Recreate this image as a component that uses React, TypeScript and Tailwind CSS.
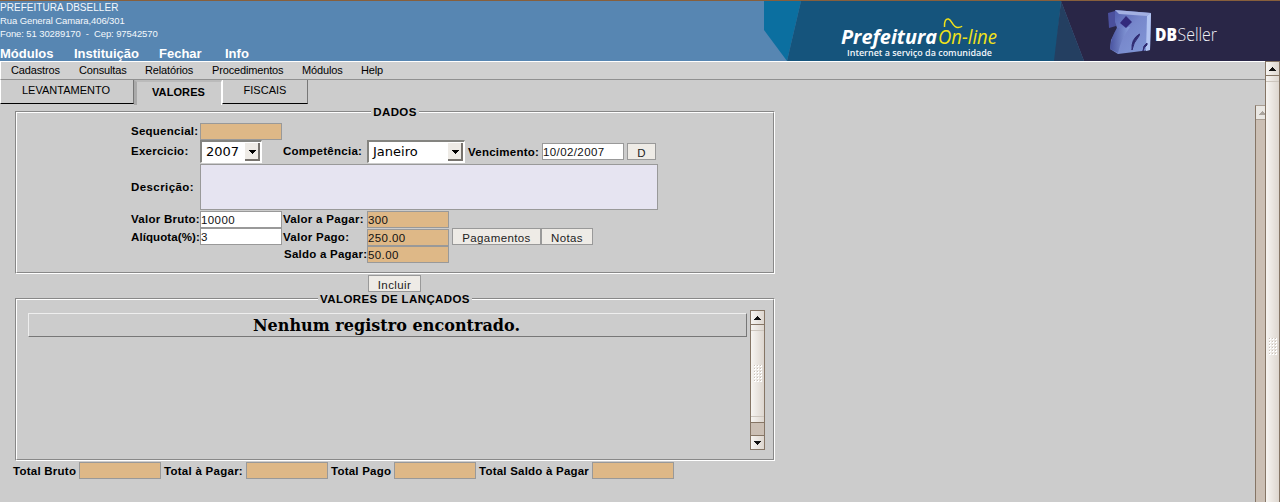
import type { ReactNode } from "react";

const label = "shrink-0 whitespace-nowrap text-[11.5px] leading-[15px] h-[14px] font-bold text-black";

function Field({ value = "", className = "bg-[#deb887]" }: { value?: string; className?: string }) {
  return (
    <input
      readOnly
      value={value}
      className={`block h-[17px] w-[82px] shrink-0 border border-[#999999] pt-px text-[11.5px] leading-[14px] tracking-[0.4px] text-[#111] outline-none ${className}`}
    />
  );
}

function Button({ children, className }: { children: ReactNode; className: string }) {
  return (
    <button className={`flex h-[17px] shrink-0 items-center justify-center border border-[#999999] bg-[#eeebe6] pt-[2px] text-[11.5px] leading-[14px] tracking-[0.4px] text-[#222] ${className}`}>
      {children}
    </button>
  );
}

function Select({ value, className }: { value: string; className: string }) {
  return (
    <div className={`flex h-[23px] shrink-0 border-t-2 border-r border-b border-l-2 border-t-[#848480] border-r-white border-b-white border-l-[#848480] bg-white ${className}`}>
      <span className="flex-1 pl-[4px] font-['DejaVu_Sans'] text-[13px] leading-[20px] text-black">{value}</span>
      <span className="mr-px flex h-[18px] w-[15px] items-center justify-center self-center border-r-2 border-b-2 border-[#77736e] bg-[#eeebe6] pt-px pl-[2px]">
        <svg width="7" height="4" viewBox="0 0 7 4" shapeRendering="crispEdges" className="shrink-0"><path d="M0 0h7v1H6v1H5v1H4v1H3V3H2V2H1V1H0z" /></svg>
      </span>
    </div>
  );
}

function Arrow({ down = false, fill = "#111" }: { down?: boolean; fill?: string }) {
  return (
    <svg width="7" height="4" viewBox="0 0 7 4" shapeRendering="crispEdges" className={`shrink-0 ${down ? "rotate-180" : ""}`}>
      <path d="M3 0h1v1h1v1h1v1h1v1H0V3h1V2h1V1h1z" fill={fill} />
    </svg>
  );
}

function Grip() {
  return (
    <svg width="9" height="18" viewBox="0 0 9 18" shapeRendering="crispEdges" className="shrink-0">
      {[0, 3, 6, 9, 12, 15].map((y) =>
        [0, 3, 6].map((x) => (
          <g key={`${x}-${y}`}>
            <rect x={x} y={y} width="2" height="2" fill="#fff" />
            <rect x={x} y={y} width="1" height="1" fill="#c9c1b9" />
          </g>
        ))
      )}
    </svg>
  );
}

const face = "bg-linear-to-r from-[#f7f5f2] to-[#ddd6cf]";

function Fieldset({ title, className, children }: { title: string; className: string; children: ReactNode }) {
  return (
    <section className={`ml-[15px] w-[760px] border border-t-[#888] border-r-white border-b-white border-l-[#888] ${className}`}>
      <div className="flex h-full flex-col border border-t-white border-r-[#888] border-b-[#888] border-l-white">
        <h2 className="-mt-[8px] h-[14px] self-center bg-[#ccc] px-[2px] text-[11.5px] leading-[15px] font-bold tracking-[0.4px]">{title}</h2>
        {children}
      </div>
    </section>
  );
}

function Banner() {
  return (
    <svg width="516" height="60" viewBox="764 1 516 60" className="block shrink-0">
      <defs>
        <linearGradient id="front" x1="0" y1="0" x2="1" y2="1">
          <stop offset="0" stopColor="#4d58ab" />
          <stop offset=".45" stopColor="#7787cb" />
          <stop offset="1" stopColor="#8299d8" />
        </linearGradient>
        <linearGradient id="side" x1="0" y1="0" x2="1" y2="0">
          <stop offset="0" stopColor="#3f4896" />
          <stop offset="1" stopColor="#8fa6e2" />
        </linearGradient>
      </defs>
      <path d="M764 1H801L787 61L764 30z" fill="#0b6fa0" />
      <path d="M801 1H1061L1055 61H787z" fill="#15547c" />
      <path d="M1061 1L1084 61H1054z" fill="#243f61" />
      <path d="M1061 1H1280V61H1084z" fill="#292647" />
      <text x="841" y="44" fontFamily="Open Sans" fontStyle="italic" fontWeight="700" fontSize="20" fill="#fff" textLength="96" lengthAdjust="spacingAndGlyphs">Prefeitura</text>
      <text x="938" y="44" fontFamily="Open Sans" fontStyle="italic" fontSize="20" fill="#f2e219" textLength="59" lengthAdjust="spacingAndGlyphs">On-line</text>
      <path d="M944.5 27C944 21 946 18.5 948.5 19C952 20 953 28 958 27.500C960 27.300 961.500 27 962 26" fill="none" stroke="#f2e219" strokeWidth="1.5" />
      <text x="847" y="55.500" fontFamily="Open Sans" fontSize="9.500" fontWeight="600" fill="#f2f6fa" textLength="145" lengthAdjust="spacingAndGlyphs">Internet a serviço da comunidade</text>
      <path d="M1108 13L1115 11L1116 26L1109 28z" fill="#4b509d" />
      <path d="M1115 10L1151 13L1150 50L1118 54L1110 49L1111 40L1117 28L1115 22z" fill="url(#front)" />
      <path d="M1115 10L1151 13L1147 16L1119 14z" fill="#a3b0e2" />
      <path d="M1147 16L1151 13L1150 50L1146 51z" fill="#b3c5f2" />
      <path d="M1117 28L1130 27Q1121 39 1118 53L1110 49Q1111 37 1117 28z" fill="url(#side)" opacity=".8" />
      <path d="M1126 16L1132 22L1126 28L1120 23z" fill="#322a7c" />
      <path d="M1139.500 34Q1131 39 1132 50Q1133 43 1139 36zM1147 43Q1143 45 1143 51Q1144 47 1147 45z" fill="#302b72" stroke="#302b72" />
      <text x="1155" y="40.500" fontFamily="Open Sans" fontWeight="800" fontSize="18" fill="#fff" textLength="22" lengthAdjust="spacingAndGlyphs">DB</text>
      <text x="1177.500" y="40.500" fontFamily="Open Sans" fontWeight="300" fontSize="18" fill="#f0f0f6" textLength="39.500" lengthAdjust="spacingAndGlyphs">Seller</text>
    </svg>
  );
}

export default function App() {
  return (
    <div className="flex h-[502px] w-[1280px] flex-col overflow-hidden bg-[#ccc] font-['Liberation_Sans',sans-serif] text-black">
      <header className="flex h-[61px] shrink-0 justify-between border-t border-[#875f3c] bg-[#5786b2] text-white">
        <div className="flex flex-col text-[9.5px] leading-[13px] tracking-[-0.1px] whitespace-pre text-[#f4f8fc]">
          <span className="text-[10px] tracking-[0.03px]">PREFEITURA DBSELLER</span>
          <span>Rua General Camara,406/301</span>
          <span>Fone: 51 30289170{"  -  "}Cep: 97542570</span>
          <nav className="mt-[6px] flex text-[13px] leading-[16px] font-bold tracking-normal text-white">
            <span className="w-[74px]">Módulos</span>
            <span className="w-[85px]">Instituição</span>
            <span className="w-[66px]">Fechar</span>
            <span>Info</span>
          </nav>
        </div>
        <Banner />
      </header>

      <div className="flex min-h-0 flex-1">
        <main className="flex min-w-0 flex-1 flex-col">
          <nav className="flex h-[19px] shrink-0 border-t border-b border-l border-t-white border-b-[#909090] border-l-white bg-[#d0d0d0] pl-[10px] text-[11px] leading-[17px] tracking-[-0.15px]">
            <span className="w-[68px]">Cadastros</span>
            <span className="w-[66px]">Consultas</span>
            <span className="w-[67px]">Relatórios</span>
            <span className="w-[90px]">Procedimentos</span>
            <span className="w-[59px]">Módulos</span>
            <span>Help</span>
          </nav>

          <div className="flex min-h-0 flex-1">
            <div className="w-[1255px] shrink-0">
              <div className="flex h-[25px] text-[11px]">
                <div className="h-[24px] w-[134px] border-r border-b border-l border-r-[#777] border-b-black border-l-white pr-[2px] text-center leading-[21px]">LEVANTAMENTO</div>
                <div className="h-[25px] w-[88px] border-t-2 border-r border-l-[3px] border-t-[#bbb] border-r-white border-l-[#aaa] pr-px text-center leading-[21px] font-bold tracking-[0.1px]">VALORES</div>
                <div className="h-[24px] w-[86px] border-r border-b border-l border-r-[#777] border-b-black border-l-white text-center leading-[21px]">FISCAIS</div>
              </div>

              <Fieldset title="DADOS" className="mt-[6px] h-[163px]">
                <div className="flex flex-col pt-[4px] pl-[114px]">
                  <div className="flex h-[17px]">
                    <span className={`${label} w-[69px] pt-px tracking-[0.25px]`}>Sequencial:</span>
                    <Field />
                  </div>
                  <div className="flex h-[24px]">
                    <span className={`${label} w-[69px] pt-[4px] tracking-[0.25px]`}>Exercicio:</span>
                    <Select value="2007" className="w-[62px]" />
                    <span className={`${label} ml-[21px] w-[84px] pt-[4px] tracking-[0.26px]`}>Competência:</span>
                    <Select value="Janeiro" className="w-[98px]" />
                    <span className={`${label} ml-[3px] w-[74px] pt-[5px] tracking-[0.25px]`}>Vencimento:</span>
                    <div className="flex gap-[3px] pt-[3px]">
                      <Field value="10/02/2007" className="bg-white" />
                      <Button className="w-[29px]">D</Button>
                    </div>
                  </div>
                  <div className="flex h-[47px]">
                    <span className={`${label} w-[69px] pt-[16px] tracking-[0.42px]`}>Descrição:</span>
                    <textarea readOnly className="block h-[46px] w-[458px] resize-none border border-[#999] bg-[#e6e4f1] outline-none" />
                  </div>
                  <div className="flex">
                    <div className="flex w-[69px] flex-col gap-[4px] pt-px">
                      <span className={`${label} tracking-[0.26px]`}>Valor Bruto:</span>
                      <span className={`${label} tracking-[0.1px]`}>Alíquota(%):</span>
                    </div>
                    <div className="flex w-[83px] flex-col">
                      <Field value="10000" className="bg-white" />
                      <Field value="3" className="bg-white" />
                    </div>
                    <div className="flex w-[84px] flex-col pt-px">
                      <span className={`${label} tracking-[0.3px]`}>Valor a Pagar:</span>
                      <span className={`${label} mt-[4px] tracking-[0.27px]`}>Valor Pago:</span>
                      <span className={`${label} mt-[3px] pl-px tracking-[0.24px]`}>Saldo a Pagar:</span>
                    </div>
                    <div className="flex w-[85px] flex-col">
                      <Field value="300" />
                      <Field value="250.00" className="mt-px bg-[#deb887]" />
                      <Field value="50.00" />
                    </div>
                    <div className="flex pt-[17px]">
                      <Button className="w-[89px]">Pagamentos</Button>
                      <Button className="w-[52px]">Notas</Button>
                    </div>
                  </div>
                </div>
              </Fieldset>

              <div className="flex h-[24px] pt-px pl-[368px]">
                <Button className="w-[53px]">Incluir</Button>
              </div>

              <Fieldset title="VALORES DE LANÇADOS" className="h-[163px]">
                <div className="flex gap-[3px] pt-[4px] pl-[11px]">
                  <div className="mt-[3px] h-[24px] w-[719px] border border-t-[#eee] border-r-[#777] border-b-[#777] border-l-[#eee] pr-[2px] text-center font-['DejaVu_Serif',serif] text-[16px] leading-[23px] font-bold tracking-[0.03px]">
                    Nenhum registro encontrado.
                  </div>
                  <div className="flex h-[140px] w-[15px] flex-col border border-[#857565] bg-[#cbbfb4]">
                    <div className={`flex h-[14px] items-center justify-center border-b border-[#857565] ${face}`}><Arrow /></div>
                    <div className={`flex h-[98px] flex-col border-b border-[#857565] ${face}`}>
                      <div className="h-[6px] border-b border-[#ccc5bd]" />
                      <div className="flex flex-1 items-center justify-center pl-[2px]"><Grip /></div>
                      <div className="h-[6px] border-t border-[#ccc5bd]" />
                    </div>
                    <div className={`mt-[12px] flex flex-1 items-center justify-center border-t border-[#857565] ${face}`}><Arrow down /></div>
                  </div>
                </div>
              </Fieldset>

              <div className="flex pt-px pl-[13px]">
                <span className={`${label} w-[66px] pt-[2px] tracking-[0.25px]`}>Total Bruto</span>
                <Field />
                <span className={`${label} ml-[3px] w-[82px] pt-[2px] tracking-[0.27px]`}>Total à Pagar:</span>
                <Field />
                <span className={`${label} ml-[3px] w-[63px] pt-[2px] tracking-[0.23px]`}>Total Pago</span>
                <Field />
                <span className={`${label} ml-[3px] w-[113px] pt-[2px] tracking-[0.22px]`}>Total Saldo à Pagar</span>
                <Field />
              </div>
            </div>

            <div className="mt-[25px] flex w-[10px] shrink-0 flex-col overflow-hidden border-t border-l border-t-[#a89d92] border-l-[#857565] bg-[#cbbfb4]">
              <div className="flex h-[14px] items-center border-b border-[#a89d92] bg-[#e9e7e3] pl-[3px]"><Arrow fill="#aaa49d" /></div>
            </div>
          </div>
        </main>

        <div className="flex w-[15px] shrink-0 flex-col border-x border-t border-[#857565]">
          <div className={`flex h-[14px] shrink-0 items-center justify-center border-b border-[#857565] ${face}`}><Arrow /></div>
          <div className={`flex min-h-0 flex-1 flex-col ${face}`}>
            <div className="h-[6px] shrink-0 border-b border-[#ccc5bd]" />
            <div className="flex justify-center pt-[256px] pl-[2px]"><Grip /></div>
          </div>
        </div>
      </div>
    </div>
  );
}
